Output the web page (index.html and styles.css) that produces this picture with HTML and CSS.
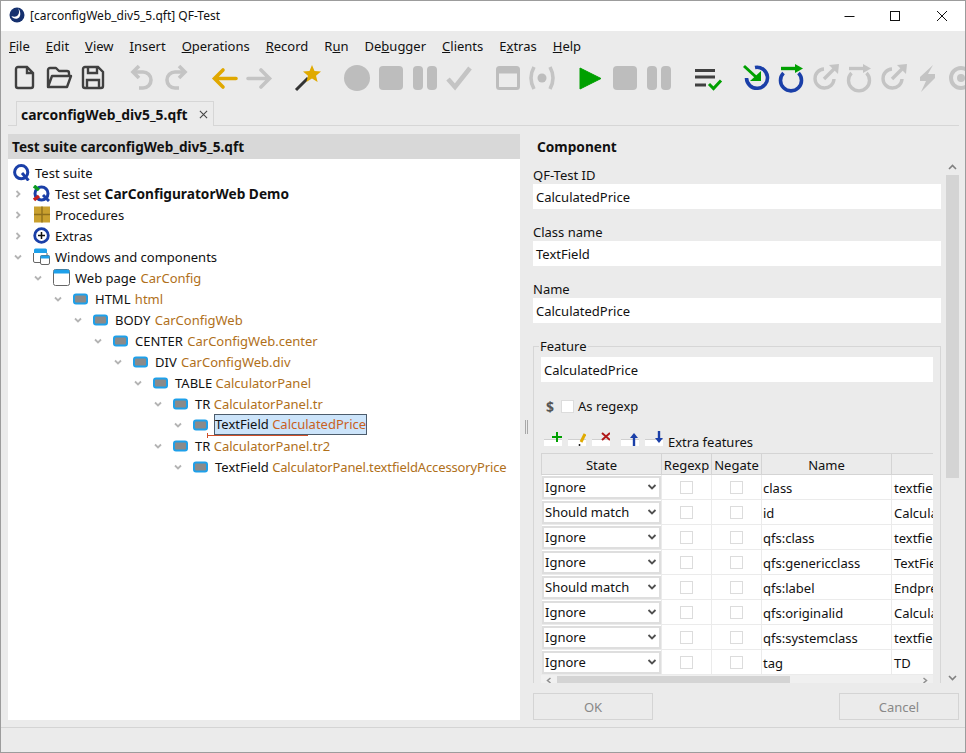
FILE: index.html
```
<!DOCTYPE html>
<html lang="en">
<head>
<meta charset="utf-8">
<title>QF-Test</title>
<link rel="stylesheet" href="styles.css">
</head>
<body>
<svg class="defs" aria-hidden="true">
  <symbol id="comp" viewBox="0 0 17 14"><rect x="1" y="2.500" width="13" height="9" rx="2" fill="#8a8a8a" stroke="#1ea0ea" stroke-width="2"/></symbol>
  <symbol id="down" viewBox="0 0 10 10"><path d="M2 3.500l3 3 3-3" fill="none" stroke="#b4b4b4" stroke-width="1.800"/></symbol>
  <symbol id="right" viewBox="0 0 10 10"><path d="M3.500 2l3 3-3 3" fill="none" stroke="#b4b4b4" stroke-width="1.800"/></symbol>
  <symbol id="sel" viewBox="0 0 10 10"><path d="M1.500 3l3.500 3.500L8.500 3" fill="none" stroke="#505050" stroke-width="1.800"/></symbol>
  <symbol id="stopg" viewBox="0 0 34 30"><rect x="5" y="3" width="24" height="24" rx="4" fill="#bdbdbd"/></symbol>
  <symbol id="pauseg" viewBox="0 0 34 30"><rect x="5" y="3" width="10" height="24" rx="4" fill="#bdbdbd"/><rect x="19" y="3" width="10" height="24" rx="4" fill="#bdbdbd"/></symbol>
  <symbol id="outg" viewBox="0 0 34 30"><path d="M16 6A9.500 9.500 0 1 0 26 16" fill="none" stroke="#c4c4c4" stroke-width="3.400"/><path d="M16 16L27 5" stroke="#c4c4c4" stroke-width="3.400"/><path d="M21 2l10-1-1 10z" fill="#c4c4c4"/></symbol>
</svg>
<div class="window">
  <header class="titlebar">
    <svg class="appicon" viewBox="0 0 16 16"><circle cx="8" cy="8" r="7.500" fill="#15306e"/><path d="M9 1c1.500 3 1.500 6-1 8-1.500 1-3.500 1-5.500 0 1 3 6 4 8 1 1.500-2.500 1-6-1.500-9z" fill="#fff"/></svg>
    <span class="titletext">[carconfigWeb_div5_5.qft] QF-Test</span>
    <div class="winctl">
      <svg viewBox="0 0 46 30"><path d="M17.500 15.500h10" stroke="#111" fill="none"/></svg>
      <svg viewBox="0 0 46 30"><rect x="17.500" y="10.500" width="9" height="9" stroke="#111" fill="none"/></svg>
      <svg viewBox="0 0 46 30"><path d="M18 10l10 10M28 10L18 20" stroke="#111" fill="none"/></svg>
    </div>
  </header>
  <nav class="menubar">
    <span><u>F</u>ile</span><span><u>E</u>dit</span><span><u>V</u>iew</span><span><u>I</u>nsert</span><span><u>O</u>perations</span><span><u>R</u>ecord</span><span>R<u>u</u>n</span><span>De<u>b</u>ugger</span><span><u>C</u>lients</span><span>E<u>x</u>tras</span><span><u>H</u>elp</span>
  </nav>
  <div class="toolbar">
    <div class="tgroup">
      <svg class="ti" viewBox="0 0 34 30"><path d="M10 4h9l6 6v13a2 2 0 0 1-2 2H10a2 2 0 0 1-2-2V6a2 2 0 0 1 2-2zM19 4v6h6" fill="none" stroke="#404040" stroke-width="2.400"/></svg>
      <svg class="ti" viewBox="0 0 34 30"><path d="M6 24V7a2 2 0 0 1 2-2h6l3 3h8a2 2 0 0 1 2 2v3M6 24l4-11h19l-4 11z" fill="none" stroke="#404040" stroke-width="2.400" stroke-linejoin="round"/></svg>
      <svg class="ti" viewBox="0 0 34 30"><path d="M9 4h13l5 5v14a2 2 0 0 1-2 2H9a2 2 0 0 1-2-2V6a2 2 0 0 1 2-2zM12 4v6h9V4M11 25v-8h12v8" fill="none" stroke="#404040" stroke-width="2.400"/></svg>
    </div>
    <div class="tgroup">
      <svg class="ti" viewBox="0 0 34 30"><path d="M8 9h10a8 8 0 0 1 0 16h-4" fill="none" stroke="#c4c4c4" stroke-width="3.600"/><path d="M14 3L8 9l6 6" fill="none" stroke="#c4c4c4" stroke-width="3.600"/></svg>
      <svg class="ti" viewBox="0 0 34 30"><path d="M26 9H16a8 8 0 0 0 0 16h4" fill="none" stroke="#c4c4c4" stroke-width="3.600"/><path d="M20 3l6 6-6 6" fill="none" stroke="#c4c4c4" stroke-width="3.600"/></svg>
    </div>
    <div class="tgroup">
      <svg class="ti" viewBox="0 0 34 30"><path d="M28 15.500H7M15 7l-8.500 8.500L15 24" fill="none" stroke="#e0a800" stroke-width="3.600" stroke-linecap="round"/></svg>
      <svg class="ti" viewBox="0 0 34 30"><path d="M6 15.500h21M19 7l8.500 8.500L19 24" fill="none" stroke="#c4c4c4" stroke-width="3.600" stroke-linecap="round"/></svg>
    </div>
    <div class="tgroup">
      <svg class="ti" viewBox="0 0 34 30"><path d="M5 27L17 15" stroke="#333" stroke-width="3"/><path d="M21 2l2.500 6 6.500.5-5 4.200 1.600 6.300-5.600-3.400-5.600 3.400 1.600-6.300-5-4.200 6.500-.5z" fill="#e0aa00"/></svg>
    </div>
    <div class="tgroup">
      <svg class="ti" viewBox="0 0 34 30"><circle cx="17" cy="15" r="13" fill="#bdbdbd"/></svg>
      <svg class="ti"><use href="#stopg"/></svg>
      <svg class="ti"><use href="#pauseg"/></svg>
      <svg class="ti" viewBox="0 0 34 30"><path d="M6 16l7 8L28 5" fill="none" stroke="#c4c4c4" stroke-width="4.600"/></svg>
    </div>
    <div class="tgroup">
      <svg class="ti" viewBox="0 0 34 30"><rect x="6.500" y="4.500" width="21" height="21" rx="2" fill="none" stroke="#bdbdbd" stroke-width="3"/><path d="M6 8h22" stroke="#bdbdbd" stroke-width="5"/></svg>
      <svg class="ti" viewBox="0 0 34 30"><path d="M9 4q-6 11 0 22M25 4q6 11 0 22" fill="none" stroke="#c4c4c4" stroke-width="3.600"/><circle cx="17" cy="15" r="4.500" fill="#bdbdbd"/></svg>
    </div>
    <div class="tgroup">
      <svg class="ti" viewBox="0 0 34 30"><path d="M6 5l21 10.500L6 26z" fill="#00a000" stroke="#00a000" stroke-linejoin="round"/></svg>
      <svg class="ti"><use href="#stopg"/></svg>
      <svg class="ti"><use href="#pauseg"/></svg>
    </div>
    <div class="tgroup">
      <svg class="ti" viewBox="0 0 34 30"><path d="M4 7.500h20M4 14h20M4 22h11" stroke="#404040" stroke-width="3.200"/><path d="M18 21l4.500 4.500 7.500-8" fill="none" stroke="#00a000" stroke-width="3"/></svg>
    </div>
    <div class="tgroup">
      <svg class="ti" viewBox="0 0 34 30"><path d="M15 4.500A10.500 10.500 0 1 1 6.500 15" fill="none" stroke="#1a3fa8" stroke-width="3.600"/><path d="M4 3l12 11" stroke="#00a000" stroke-width="3"/><path d="M21 8v10H10z" fill="#00a000"/></svg>
      <svg class="ti" viewBox="0 0 34 30"><path d="M9.500 10A10.500 10.500 0 1 0 24.500 10" fill="none" stroke="#1a3fa8" stroke-width="3.600"/><path d="M7 5.500h15" stroke="#00a000" stroke-width="3.400"/><path d="M21 1l8 4.500-8 4.500z" fill="#00a000"/></svg>
      <svg class="ti"><use href="#outg"/></svg>
      <svg class="ti" viewBox="0 0 34 30"><path d="M9.500 10A10.500 10.500 0 1 0 24.500 10" fill="none" stroke="#c4c4c4" stroke-width="3.400"/><path d="M7 5.500h15" stroke="#c4c4c4" stroke-width="3.400"/><path d="M21 1l8 4.500-8 4.500z" fill="#c4c4c4"/></svg>
      <svg class="ti"><use href="#outg"/></svg>
      <svg class="ti" viewBox="0 0 34 30"><path d="M23 2L10 14v4h6l-5 11 14-14v-4h-7z" fill="#c4c4c4"/></svg>
      <svg class="ti" viewBox="0 0 34 30"><circle cx="17" cy="15" r="10" fill="none" stroke="#c4c4c4" stroke-width="4"/><circle cx="17" cy="15" r="4" fill="#c4c4c4"/></svg>
    </div>
  </div>
  <div class="tabstrip">
    <div class="tab"><b class="tabname">carconfigWeb_div5_5.qft</b><svg class="tabx" viewBox="0 0 10 10"><path d="M1 1l8 8M9 1L1 9" stroke="#444" stroke-width="1.200"/></svg></div>
  </div>
  <main class="main">
    <section class="left">
      <h2 class="lefthead">Test suite carconfigWeb_div5_5.qft</h2>
      <ul class="tree">
        <li class="row l0"><svg class="ic" viewBox="0 0 17 17"><circle cx="8.200" cy="8.200" r="6.600" fill="none" stroke="#1a3fa8" stroke-width="3"/><path d="M9 9l6.500 7.500" stroke="#1a3fa8" stroke-width="3"/></svg><span>Test suite</span></li>
        <li class="row l1"><svg class="ch"><use href="#right"/></svg><svg class="ic" viewBox="0 0 17 17"><circle cx="8.500" cy="8.500" r="6.500" fill="none" stroke="#1a3fa8" stroke-width="3"/><path d="M1 1l5 4" stroke="#0a9a20" stroke-width="3.500"/><path d="M1 15l5-4" stroke="#c42020" stroke-width="3.500"/><path d="M10 10l6 6" stroke="#1a3fa8" stroke-width="3"/></svg><span>Test set <b>CarConfiguratorWeb Demo</b></span></li>
        <li class="row l1"><svg class="ch"><use href="#right"/></svg><svg class="ic" viewBox="0 0 17 17"><rect x="1" y="0.500" width="16" height="16" fill="#c9a02e"/><path d="M9 .5v16M1 8.500h16" stroke="#8f6f1c" stroke-width="1.400"/></svg><span>Procedures</span></li>
        <li class="row l1"><svg class="ch"><use href="#right"/></svg><svg class="ic" viewBox="0 0 17 17"><circle cx="8.500" cy="8.500" r="6.800" fill="#fff" stroke="#1a3fa8" stroke-width="2.800"/><path d="M5 8.500h7M8.500 5v7" stroke="#111" stroke-width="1.500"/></svg><span>Extras</span></li>
        <li class="row l1"><svg class="ch"><use href="#down"/></svg><svg class="ic" viewBox="0 0 17 17"><path d="M1 5V2a1.500 1.500 0 0 1 1.500-1.500h10A1.500 1.500 0 0 1 14 2v3z" fill="#1ea0ea"/><path d="M.500 5v8a1.500 1.500 0 0 0 1.500 1.500h5M14 5v2" fill="none" stroke="#666"/><rect x="7.500" y="7.500" width="9" height="9" rx="1.500" fill="#fff" stroke="#666"/><rect x="7.500" y="7.500" width="9" height="3" fill="#1ea0ea"/></svg><span>Windows and components</span></li>
        <li class="row l2"><svg class="ch"><use href="#down"/></svg><svg class="ic" viewBox="0 0 17 17"><rect x=".5" y=".5" width="16" height="16" rx="2" fill="#fff" stroke="#666"/><path d="M.5 4.500V2.500a2 2 0 0 1 2-2h12a2 2 0 0 1 2 2v2z" fill="#1ea0ea"/></svg><span>Web page <i>CarConfig</i></span></li>
        <li class="row l3"><svg class="ch"><use href="#down"/></svg><svg class="ic"><use href="#comp"/></svg><span>HTML <i>html</i></span></li>
        <li class="row l4"><svg class="ch"><use href="#down"/></svg><svg class="ic"><use href="#comp"/></svg><span>BODY <i>CarConfigWeb</i></span></li>
        <li class="row l5"><svg class="ch"><use href="#down"/></svg><svg class="ic"><use href="#comp"/></svg><span>CENTER <i>CarConfigWeb.center</i></span></li>
        <li class="row l6"><svg class="ch"><use href="#down"/></svg><svg class="ic"><use href="#comp"/></svg><span>DIV <i>CarConfigWeb.div</i></span></li>
        <li class="row l7"><svg class="ch"><use href="#down"/></svg><svg class="ic"><use href="#comp"/></svg><span>TABLE <i>CalculatorPanel</i></span></li>
        <li class="row l8"><svg class="ch"><use href="#down"/></svg><svg class="ic"><use href="#comp"/></svg><span>TR <i>CalculatorPanel.tr</i></span></li>
        <li class="row l9"><svg class="ch"><use href="#down"/></svg><svg class="ic"><use href="#comp"/></svg><span class="selected">TextField <i>CalculatedPrice</i></span><div class="dropline"></div></li>
        <li class="row l8"><svg class="ch"><use href="#down"/></svg><svg class="ic"><use href="#comp"/></svg><span>TR <i>CalculatorPanel.tr2</i></span></li>
        <li class="row l9"><svg class="ch"><use href="#down"/></svg><svg class="ic"><use href="#comp"/></svg><span>TextField <i class="long">CalculatorPanel.textfieldAccessoryPrice</i></span></li>
      </ul>
    </section>
    <div class="splitter"><div class="grip"></div></div>
    <section class="right">
      <h2 class="righthead">Component</h2>
      <div class="scrollarea">
        <div class="form">
          <label class="flabel first">QF-Test ID</label>
          <div class="input">CalculatedPrice</div>
          <label class="flabel">Class name</label>
          <div class="input">TextField</div>
          <label class="flabel">Name</label>
          <div class="input">CalculatedPrice</div>
          <fieldset class="feature">
            <legend>Feature</legend>
            <div class="input">CalculatedPrice</div>
            <div class="regexrow"><b class="dollar">$</b><span class="cb"></span><span>As regexp</span></div>
            <div class="extrarow">
              <span class="tb"><svg viewBox="0 0 18 16"><path d="M13 2v10M8 7h10" stroke="#00a000" stroke-width="2"/></svg></span>
              <span class="tb"><svg viewBox="0 0 18 16"><path d="M17 4l-4 8" stroke="#e0aa00" stroke-width="3"/><path d="M11.500 14v2" stroke="#222" stroke-width="1.500"/></svg></span>
              <span class="tb tbgap"><svg viewBox="0 0 18 16"><path d="M10 3l8 7M18 3l-8 7" stroke="#b01818" stroke-width="2"/></svg></span>
              <span class="tb"><svg viewBox="0 0 18 16"><path d="M13 16V6" stroke="#1a3fa8" stroke-width="2.400"/><path d="M9 8l4-5 4 5z" fill="#1a3fa8"/></svg></span>
              <span class="tb"><svg viewBox="0 0 18 16"><path d="M14 1v8" stroke="#1a3fa8" stroke-width="2.400"/><path d="M10 8l4 5 4-5z" fill="#1a3fa8"/></svg></span>
              <span class="extratext">Extra features</span>
            </div>
            <div class="tablewrap">
              <table class="grid">
                <thead><tr><th class="c1">State</th><th class="c2">Regexp</th><th class="c2">Negate</th><th class="c4">Name</th><th class="c5"></th></tr></thead>
                <tbody>
                  <tr><td class="c1"><div class="sel">Ignore<svg><use href="#sel"/></svg></div></td><td><span class="tcb"></span></td><td><span class="tcb"></span></td><td class="txt">class</td><td class="txt val">textfield</td></tr>
                  <tr><td class="c1"><div class="sel">Should match<svg><use href="#sel"/></svg></div></td><td><span class="tcb"></span></td><td><span class="tcb"></span></td><td class="txt">id</td><td class="txt val">CalculatedPrice</td></tr>
                  <tr><td class="c1"><div class="sel">Ignore<svg><use href="#sel"/></svg></div></td><td><span class="tcb"></span></td><td><span class="tcb"></span></td><td class="txt">qfs:class</td><td class="txt val">textfield</td></tr>
                  <tr><td class="c1"><div class="sel">Ignore<svg><use href="#sel"/></svg></div></td><td><span class="tcb"></span></td><td><span class="tcb"></span></td><td class="txt">qfs:genericclass</td><td class="txt val">TextField</td></tr>
                  <tr><td class="c1"><div class="sel">Should match<svg><use href="#sel"/></svg></div></td><td><span class="tcb"></span></td><td><span class="tcb"></span></td><td class="txt">qfs:label</td><td class="txt val">Endpreis</td></tr>
                  <tr><td class="c1"><div class="sel">Ignore<svg><use href="#sel"/></svg></div></td><td><span class="tcb"></span></td><td><span class="tcb"></span></td><td class="txt">qfs:originalid</td><td class="txt val">CalculatedPrice</td></tr>
                  <tr><td class="c1"><div class="sel">Ignore<svg><use href="#sel"/></svg></div></td><td><span class="tcb"></span></td><td><span class="tcb"></span></td><td class="txt">qfs:systemclass</td><td class="txt val">textfield</td></tr>
                  <tr><td class="c1"><div class="sel">Ignore<svg><use href="#sel"/></svg></div></td><td><span class="tcb"></span></td><td><span class="tcb"></span></td><td class="txt">tag</td><td class="txt val">TD</td></tr>
                </tbody>
              </table>
              <div class="hbar">
                <svg viewBox="0 0 16 8"><path d="M9.500 2l-3 2.500 3 2.500" fill="none" stroke="#909090" stroke-width="1.500"/></svg>
                <div class="hthumb"></div>
                <svg class="hend" viewBox="0 0 16 8"><path d="M6.500 2l3 2.500-3 2.500" fill="none" stroke="#909090" stroke-width="1.500"/></svg>
              </div>
            </div>
          </fieldset>
        </div>
        <div class="vbar">
          <svg viewBox="0 0 13 14"><path d="M3 9l3.500-3.500L10 9" fill="none" stroke="#808080" stroke-width="1.600"/></svg>
          <div class="vthumb"></div>
          <svg class="vend" viewBox="0 0 13 14"><path d="M3 5l3.500 3.500L10 5" fill="none" stroke="#808080" stroke-width="1.600"/></svg>
        </div>
      </div>
      <div class="buttons"><button class="btn">OK</button><button class="btn">Cancel</button></div>
    </section>
  </main>
  <footer class="status"></footer>
</div>
</body>
</html>
```
FILE: styles.css
```
* { box-sizing: border-box; }
html, body { margin: 0; padding: 0; }
body { width: 966px; height: 753px; overflow: hidden; font-family: "Noto Sans", "Open Sans", sans-serif; font-size: 13px; color: #111; background: #ebebeb; }
.defs { display: none; }
b { font-size: 13.7px; }
.window { width: 966px; height: 753px; border: 1px solid #9c9c9c; display: flex; flex-direction: column; overflow: hidden; background: #ebebeb; }
.titlebar { height: 30px; flex: none; background: #fff; display: flex; align-items: center; padding-left: 8px; }
.appicon { width: 16px; height: 16px; margin-right: 5px; margin-top: -2px; }
.titletext { font-size: 12px; margin-top: -1px; }
.winctl { margin-left: auto; display: flex; }
.winctl svg { width: 46px; height: 30px; }
.menubar { height: 31px; flex: none; display: flex; align-items: center; gap: 16px; padding-left: 8px; padding-bottom: 2px; font-size: 13px; }
.toolbar { height: 38px; flex: none; display: flex; gap: 15px; padding-left: 7px; padding-top: 1px; overflow: hidden; white-space: nowrap; }
.tgroup { display: flex; flex: none; }
.ti { width: 34px; height: 30px; flex: none; }
.tabstrip { height: 26px; flex: none; margin: 0 6px 0 7px; padding-left: 8px; border-bottom: 1px solid #d6d6d6; display: flex; align-items: flex-end; }
.tab { width: 198px; height: 25px; border: 1px solid #d6d6d6; border-bottom: none; display: flex; align-items: center; padding-left: 4px; margin-bottom: -1px; background: #ebebeb; }
.tabname { font-size: 13.85px; }
.tabx { width: 9px; height: 9px; margin-left: auto; margin-right: 5px; }
.main { flex: none; height: 586px; margin-top: 8px; padding-left: 7px; display: flex; }
.left { width: 512px; flex: none; background: #fff; display: flex; flex-direction: column; }
.lefthead { margin: 0; height: 25px; flex: none; background: #d8d8d8; font-size: 13.6px; font-weight: 700; line-height: 26px; padding-left: 4px; }
.tree { list-style: none; margin: 0; padding: 3px 0 0; }
.row { height: 21px; display: flex; align-items: center; position: relative; white-space: nowrap; }
.row i { font-style: normal; color: #b0701a; margin-left: 1px; }
.row i.long { letter-spacing: -0.13px; margin-left: 0; }
.ch { width: 10px; height: 10px; margin: 0 5px; flex: none; }
.ic { width: 17px; height: 17px; flex: none; margin-right: 5px; margin-left: 5px; }
.row .ic { height: 14px; }
.l0 .ic, .l1 .ic, .l2 .ic { height: 17px; }
.l0 { padding-left: 0; }
.l1 { padding-left: 0; }
.l2 { padding-left: 20px; }
.l3 { padding-left: 40px; }
.l4 { padding-left: 60px; }
.l5 { padding-left: 80px; }
.l6 { padding-left: 100px; }
.l7 { padding-left: 120px; }
.row.l7 i, .row.l8 i, .row.l9 i { margin-left: 0; }
.l8 { padding-left: 140px; }
.l9 { padding-left: 160px; }
.selected { margin-left: -1px; padding: 0; height: 21px; line-height: 19px; background: #cce4fa; border: 1px solid #4c5c6c; width: 153px; }
.selected i { color: #c8611e; }
.dropline { position: absolute; left: 199px; top: 21px; width: 101px; height: 1px; background: #d0502a; }
.dropline::before { content: ""; position: absolute; left: 0; top: -2px; width: 1px; height: 5px; background: #d0502a; }
.splitter { width: 13px; flex: none; display: flex; align-items: center; justify-content: center; }
.grip { width: 3px; height: 14px; border-left: 1px solid #a8a8a8; border-right: 1px solid #a8a8a8; }
.right { width: 426px; flex: none; display: flex; flex-direction: column; }
.righthead { margin: 0; height: 26px; flex: none; font-size: 13.7px; font-weight: 700; line-height: 26px; padding-left: 4px; }
.scrollarea { height: 525px; flex: none; display: flex; }
.form { width: 408px; height: 523px; overflow: hidden; flex: none; }
.flabel { display: block; padding-top: 14px; line-height: 18px; height: 32px; }
.flabel.first { padding-top: 6px; height: 24px; }
.input { height: 25px; background: #fff; line-height: 27px; padding-left: 3px; }
.feature { margin: 14px 0 0; width: 408px; min-width: 0; padding: 2px 7px 0; border: 1px solid #d6d6d6; height: 400px; }
.feature legend { padding: 0 1px; margin-left: -2px; line-height: 18px; }
.regexrow { margin-top: 12px; height: 24px; display: flex; align-items: center; padding-left: 5px; }
.dollar { color: #555; width: 15px; font-size: 14px; }
.cb { width: 13px; height: 13px; background: #fff; border: 1px solid #dcdcdc; margin-right: 4px; }
.extrarow { margin-top: 12px; height: 23px; display: flex; align-items: flex-start; padding-left: 3px; }
.tb { width: 18px; height: 16px; margin-right: 6px; flex: none; background: linear-gradient(#ebebeb 0 9px, #d0d0d0 9px 10px, #fff 10px); display: block; }
.tb svg { width: 18px; height: 16px; display: block; }
.tbgap { margin-right: 11px; }
.extratext { margin-left: -1px; margin-top: 3px; line-height: 18px; }
.tablewrap { width: 392px; overflow: hidden; }
.grid { border-collapse: collapse; table-layout: fixed; width: 518px; }
.grid th { height: 21px; padding: 1px 0 0; font-weight: 400; background: #ebebeb; border: 1px solid #d4d4d4; text-align: center; }
.grid td { height: 25px; padding: 0; background: #fff; border: 1px solid #ebebeb; text-align: center; overflow: hidden; }
.grid .c1 { width: 120px; }
.grid .c2 { width: 50px; }
.grid .c4 { width: 130px; }
.grid .c5 { width: 168px; }
.grid td.txt { text-align: left; padding: 1px 1px 0; white-space: nowrap; }
.grid td.val { padding-left: 2px; }
.sel { height: 23px; margin: 0; border: 2px solid #dedede; background: #fff; display: flex; align-items: center; justify-content: space-between; padding: 0 2px 0 1px; text-align: left; }
.sel svg { width: 10px; height: 10px; }
.tcb { display: block; width: 13px; height: 13px; margin: 0 auto; background: #fff; border: 1px solid #dcdcdc; }
.hbar { height: 9px; display: flex; background: #f0f0f0; align-items: center; }
.hbar svg { width: 16px; height: 8px; flex: none; }
.hthumb { width: 233px; height: 8px; background: #d4d4d4; }
.hend { margin-left: auto; }
.vbar { width: 13px; margin-left: 5px; flex: none; height: 525px; display: flex; flex-direction: column; background: #ebebeb; }
.vbar svg { width: 13px; height: 14px; flex: none; }
.vthumb { height: 303px; background: #d4d4d4; margin-top: 1px; }
.vend { margin-top: auto; }
.buttons { margin-top: 8px; display: flex; justify-content: space-between; }
.btn { width: 120px; height: 27px; border: 1px solid #d4d4d4; background: #ebebeb; color: #888; font: inherit; padding: 0; }
.status { flex: 1; margin-top: 7px; border-top: 1px solid #d4d4d4; }
```
